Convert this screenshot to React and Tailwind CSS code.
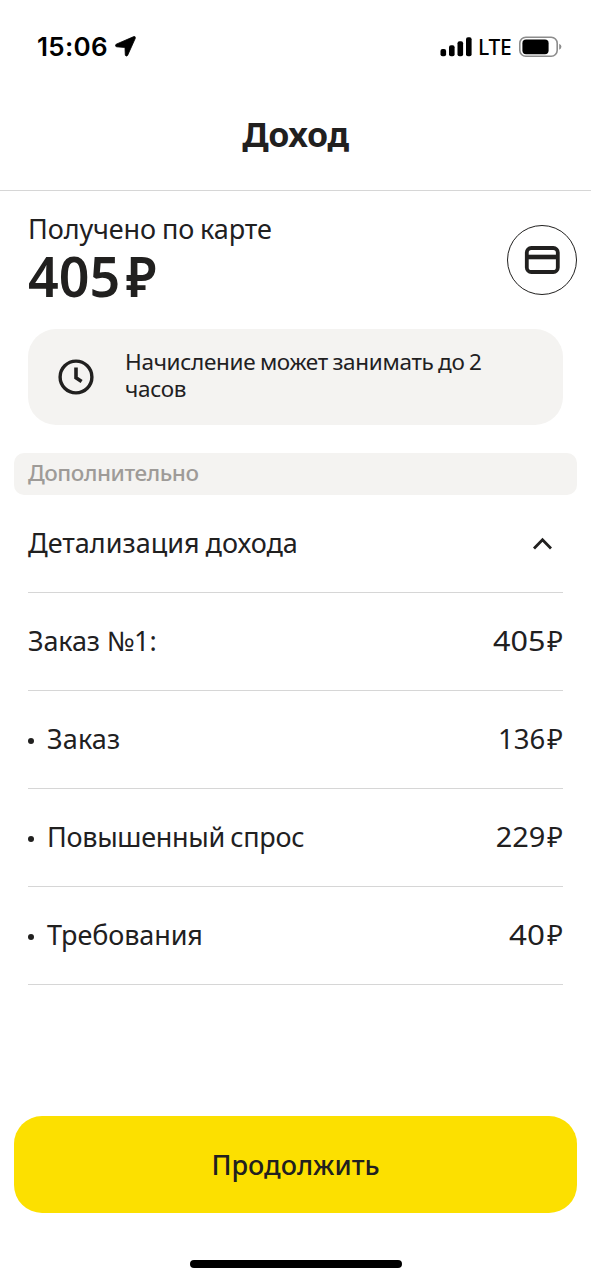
const rows = [
  { label: "Заказ", digits: "136", labelStyle: "tracking-[0.15px]", digitStyle: "scale-x-[1.02]" },
  { label: "Повышенный спрос", digits: "229", labelStyle: "tracking-[-0.3px] [word-spacing:-1.5px]", digitStyle: "scale-x-[1.07]" },
  { label: "Требования", digits: "40", labelStyle: "tracking-[-0.1px]", digitStyle: "scale-x-[1.16]" },
];

function Amount({ digits, digitStyle }) {
  return (
    <span className="flex pt-[1px]">
      <span className={`inline-block origin-right ${digitStyle}`}>{digits}</span>
      <span className="ml-[2px]">₽</span>
    </span>
  );
}

function StatusBar() {
  return (
    <div className="flex h-[94px] items-center justify-between pl-[37px] pr-[29px] text-black">
      <div className="flex items-center gap-[8px] font-['Inter',sans-serif]">
        <span className="w-[70px] text-[26px] font-semibold leading-none tracking-[0.3px]">15:06</span>
        <svg className="mb-px" width="21" height="21" viewBox="0 0 21 21" fill="currentColor">
          <path d="M18.8 0.6 L1.2 8.2 Q-0.6 9.6 1.4 10.8 L9.2 11.4 Q9.9 11.5 10 12.2 L10.3 19.2 Q11.1 20.8 12.6 19.4 L20.3 2.3 Q20.6 0.1 18.8 0.6 Z" stroke="currentColor" strokeWidth="0.8" />
        </svg>
      </div>
      <div className="flex items-center">
        <svg width="32" height="20" viewBox="0 0 32 20" fill="currentColor">
          <rect x="0.5" y="12" width="5.6" height="7.3" rx="2" />
          <rect x="9" y="8.3" width="5.6" height="11" rx="2" />
          <rect x="17.5" y="4.3" width="5.6" height="15" rx="2" />
          <rect x="26" y="0.3" width="5.6" height="19" rx="2" />
        </svg>
        <span className="ml-[6px] w-[34px] text-[21px] font-medium leading-none tracking-[-0.3px]">LTE</span>
        <svg className="ml-[6px]" width="44" height="22" viewBox="0 0 44 22">
          <rect x="1.8" y="1.3" width="37.4" height="19" rx="6" fill="none" stroke="#8c8c8c" strokeWidth="1.6" />
          <rect x="4.4" y="3.6" width="26.2" height="14.6" rx="3.6" fill="#000" />
          <path d="M41.2 7.8 Q43.4 9 43.4 10.8 Q43.4 12.6 41.2 13.8 Z" fill="#8c8c8c" />
        </svg>
      </div>
    </div>
  );
}

export default function App() {
  return (
    <div className="flex h-[1280px] w-[591px] flex-col bg-white font-['Noto_Sans',sans-serif] text-[#21201f]">
      <StatusBar />
      <header className="flex h-[97px] items-center justify-center border-b border-[#d6d6d6] pb-[17px]">
        <h1 className="text-[34px] font-bold leading-none tracking-[-0.3px]">Доход</h1>
      </header>

      <section className="flex h-[138px] justify-between pl-7 pr-[14px]">
        <div className="pt-[21px]">
          <div className="text-[27px] leading-[34px] tracking-[-0.1px] [word-spacing:-1px]">Получено по карте</div>
          <div className="flex text-[56px] font-semibold leading-[58px]">
            <span className="w-[98px] origin-left scale-x-[0.96]">405</span>
            <span className="origin-left scale-x-[0.92]">₽</span>
          </div>
        </div>
        <button className="ml-auto mt-[34px] flex size-[70px] items-center justify-center rounded-full border border-[#21201f]">
          <svg width="36" height="30" viewBox="0 0 36 30" fill="none" stroke="#21201f">
            <rect x="2.8" y="3" width="31" height="24" rx="4.5" strokeWidth="3.8" />
            <path d="M2 12 H34" strokeWidth="4.6" />
          </svg>
        </button>
      </section>

      <section className="mx-7 flex h-[96px] items-center rounded-[28px] bg-[#f4f3f1] pl-[30px]">
        <svg width="36" height="36" viewBox="0 0 36 36" fill="none" stroke="#21201f" strokeWidth="3.4">
          <circle cx="18" cy="18" r="15.9" />
          <path d="M18 8.5 V18.8 L23.6 22.6" strokeWidth="3.6" />
        </svg>
        <p className="ml-[31px] w-[380px] pb-[5px] text-[22.5px] leading-[27px] tracking-[-0.3px] [word-spacing:-1px]">Начисление может занимать до 2 часов</p>
      </section>

      <h2 className="mx-[14px] mt-[28px] flex h-[42px] items-center rounded-[10px] bg-[#f4f3f1] pb-[3px] pl-[14px] text-[22.5px] font-medium tracking-[-0.45px] text-[#9e9b98]">
        <span>Дополнительно</span>
      </h2>

      <section className="mx-7 text-[27px] leading-[36px]">
        <div className="flex h-[98px] items-center justify-between border-b border-[#d6d6d6] pb-[2px]">
          <span className="[word-spacing:-1px]">Детализация дохода</span>
          <svg className="mr-[11px] mt-[2px]" width="20" height="14" viewBox="0 0 20 14" fill="none" stroke="#21201f" strokeWidth="2.8">
            <path d="M2 11.5 L10.5 2.8 L19 11.5" />
          </svg>
        </div>
        <div className="flex h-[98px] items-center justify-between border-b border-[#d6d6d6] pb-[2px]">
          <span className="tracking-[-0.15px]">Заказ №1:</span>
          <Amount digits="405" digitStyle="scale-x-[1.13]" />
        </div>
        {rows.map((row) => (
          <div key={row.label} className="flex h-[98px] items-center justify-between border-b border-[#d6d6d6] pb-[2px]">
            <span className="flex items-center">
              <i className="mr-[13px] mt-[4px] size-[6px] rounded-full bg-[#21201f]" />
              <span className={row.labelStyle}>{row.label}</span>
            </span>
            <Amount digits={row.digits} digitStyle={row.digitStyle} />
          </div>
        ))}
      </section>

      <button className="mx-[14px] mt-auto flex h-[97px] shrink-0 items-center justify-center rounded-[28px] bg-[#fce000] pt-px text-[27px] font-medium">
        <span>Продолжить</span>
      </button>
      <div className="mx-auto mb-[12px] mt-[47px] h-[8px] w-[212px] shrink-0 rounded-full bg-black" />
    </div>
  );
}
